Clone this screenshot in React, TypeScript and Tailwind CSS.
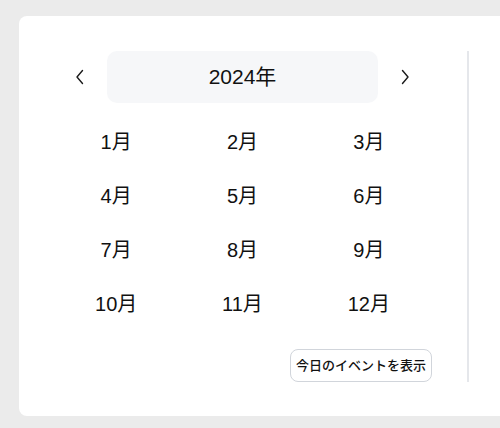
import React from "react";

const FONT = "font-['Liberation_Sans','Noto_Sans_CJK_JP',sans-serif]";

const MONTHS = Array.from({ length: 12 }, (_, i) => `${i + 1}月`);

function Chevron({ dir }: { dir: "left" | "right" }) {
  return (
    <svg width="10" height="16" viewBox="0 0 10 16" fill="none" aria-hidden>
      <path
        d={dir === "left" ? "M7.5 1.5L2 8l5.5 6.5" : "M2.5 1.5L8 8l-5.5 6.5"}
        stroke="currentColor"
        strokeWidth="1.4"
        strokeLinecap="round"
        strokeLinejoin="round"
      />
    </svg>
  );
}

export default function App() {
  return (
    <div className={`h-[428px] w-[500px] overflow-hidden bg-[#ebebeb] pl-[19px] pt-4 ${FONT}`}>
      <div className="flex h-[400px] w-[520px] rounded-lg bg-white pl-[34px] pt-[35px]">
        <div className="flex w-[379px] flex-col">
          <div className="flex h-[52px] items-center">
            <button
              type="button"
              aria-label="前の年"
              className="flex h-full w-[54px] items-center justify-center text-[#1a1a1a]"
            >
              <Chevron dir="left" />
            </button>
            <div className="flex h-full flex-1 items-center justify-center rounded-[10px] bg-[#f6f7f9] text-[21px] text-[#111111]">
              2024年
            </div>
            <button
              type="button"
              aria-label="次の年"
              className="flex h-full w-[54px] items-center justify-center text-[#1a1a1a]"
            >
              <Chevron dir="right" />
            </button>
          </div>

          <div className="mt-3 grid grid-cols-3">
            {MONTHS.map((m) => (
              <button
                key={m}
                type="button"
                className="flex h-[54px] items-center justify-center text-[20px] text-[#111111]"
              >
                {m}
              </button>
            ))}
          </div>

          <div className="mt-[18px] flex justify-end">
            <button
              type="button"
              className="h-[33px] rounded-lg border border-[#d1d5db] bg-white px-[5px] text-[13px] font-medium text-[#111111]"
            >
              今日のイベントを表示
            </button>
          </div>
        </div>

        <div className="ml-[35px] h-[331px] w-[2px] bg-[#e5e7eb]" />
      </div>
    </div>
  );
}
